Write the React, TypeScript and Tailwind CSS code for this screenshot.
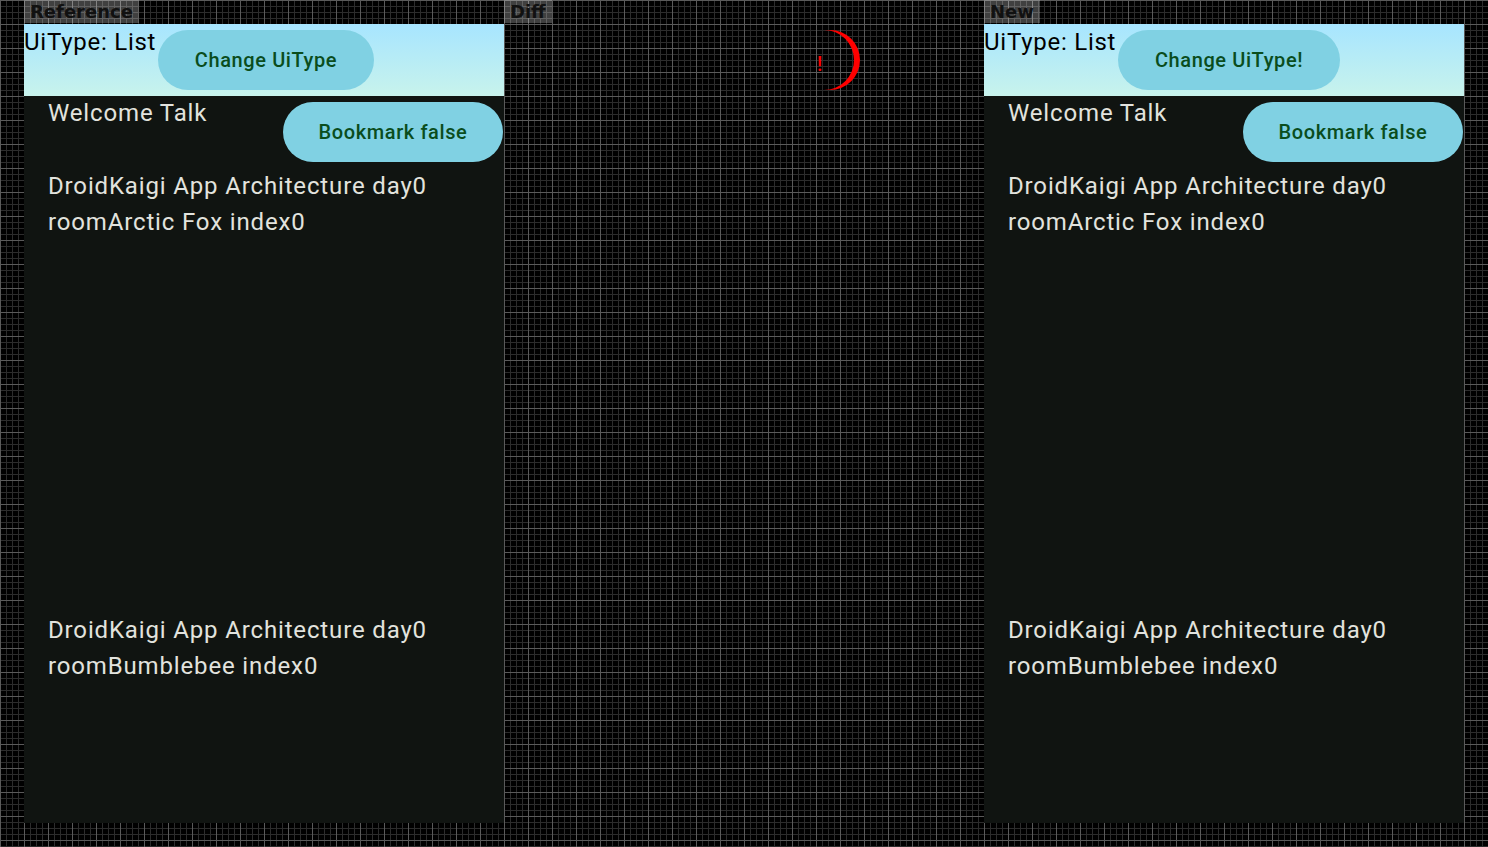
import React from "react";

const roboto = { fontFamily: "Roboto, 'Noto Sans', sans-serif" };

function Label({ text }: { text: string }) {
  return (
    <div className="self-start h-[23px] px-[6px] bg-white/25 text-[#111111] text-[18px] font-bold leading-[23px] font-['DejaVu_Sans',sans-serif]">
      {text}
    </div>
  );
}

function Pill({ text, width }: { text: string; width: string }) {
  return (
    <div
      className={`${width} h-[60px] shrink-0 rounded-full bg-[#80d1e3] flex items-center justify-center text-[20px] font-medium tracking-[0.6px] text-[#0a4d1d] leading-none`}
    >
      {text}
    </div>
  );
}

function Panel({ changeText, changeWidth }: { changeText: string; changeWidth: string }) {
  return (
    <div className="w-[480px] h-[799px] flex flex-col font-['Roboto',sans-serif]">
      <div className="h-[72px] flex items-start bg-[linear-gradient(to_bottom,#a7e5ff,#c8f3ec)]">
        <div className="w-[134px] mt-[4px] text-[24px] leading-[28px] tracking-[0.75px] text-black whitespace-nowrap">UiType: List</div>
        <div className="mt-[6px]">
          <Pill text={changeText} width={changeWidth} />
        </div>
      </div>
      <div className="flex-1 bg-[#101411] text-[#e2e3de] text-[24px]">
        <div className="flex items-start h-[66px]">
          <div className="pl-[24px] pt-[3px] leading-[28px] tracking-[0.85px]">Welcome Talk</div>
          <div className="ml-auto mr-[1px] mt-[6px]">
            <Pill text="Bookmark false" width="w-[220px]" />
          </div>
        </div>
        <div className="mt-[6px] h-[444px] pl-[24px] leading-[36px] tracking-[0.85px]">
          <div>DroidKaigi App Architecture day0</div>
          <div>roomArctic Fox index0</div>
        </div>
        <div className="pl-[24px] leading-[36px] tracking-[0.85px]">
          <div>DroidKaigi App Architecture day0</div>
          <div>roomBumblebee index0</div>
        </div>
      </div>
    </div>
  );
}

export default function App() {
  return (
    <div
      className="w-[1488px] h-[847px] overflow-hidden bg-black bg-[linear-gradient(to_right,#5a5a5a_1px,transparent_1px),linear-gradient(to_bottom,#5a5a5a_1px,transparent_1px),linear-gradient(to_right,#2c2c2c_1px,transparent_1px),linear-gradient(to_bottom,#2c2c2c_1px,transparent_1px)] bg-[size:24px_24px,24px_24px,6px_6px,6px_6px] flex pl-[24px]"
      style={roboto}
    >
      <div className="w-[480px] flex flex-col">
        <Label text="Reference" />
        <div className="mt-[1px]">
          <Panel changeText="Change UiType" changeWidth="w-[216px]" />
        </div>
      </div>
      <div className="w-[480px] flex flex-col">
        <Label text="Diff" />
        <div className="relative mt-[1px] w-[480px] h-[799px]">
          <svg className="absolute left-0 top-0" width="480" height="799" viewBox="0 0 480 799">
            <path d="M320 6 L326 6 A30 30 0 0 1 326 66 L320 66 A30 30 0 0 0 320 6 Z" fill="#ff0000" />
          </svg>
          <span className="absolute left-[313px] top-[26px] text-[20px] font-medium leading-[28px] text-[#ff0000] font-['Roboto',sans-serif]">
            !
          </span>
        </div>
      </div>
      <div className="w-[480px] flex flex-col">
        <Label text="New" />
        <div className="mt-[1px]">
          <Panel changeText="Change UiType!" changeWidth="w-[222px]" />
        </div>
      </div>
    </div>
  );
}
